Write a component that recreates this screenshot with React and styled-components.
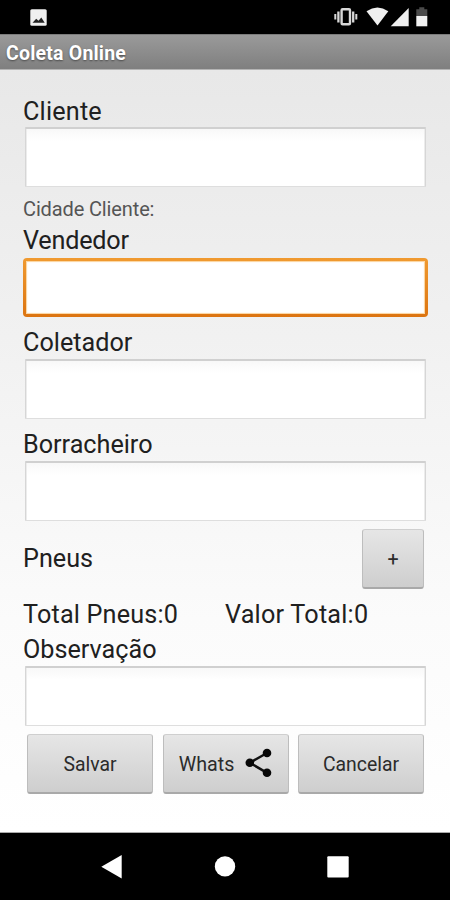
import React from "react";
import styled, { createGlobalStyle } from "styled-components";

const GlobalStyle = createGlobalStyle`
  * { box-sizing: border-box; }
  body { margin: 0; background: #000; }
`;

const Phone = styled.div`
  width: 450px;
  height: 900px;
  display: flex;
  flex-direction: column;
  overflow: hidden;
  background: #000;
  font-family: Roboto, "Liberation Sans", sans-serif;
`;

const StatusBar = styled.header`
  height: 34px;
  display: flex;
  justify-content: space-between;
  flex: none;
`;

const TitleBar = styled.h1`
  height: 36px;
  flex: none;
  margin: 0;
  padding-left: 6px;
  background: linear-gradient(#9a9a9a, #7f7f7f);
  border-top: 1px solid #7b7b7b;
  border-bottom: 1px solid #b4b4b4;
  color: #fff;
  font-size: 19.5px;
  font-weight: 700;
  line-height: 37px;
  letter-spacing: 0.2px;
  text-shadow: 0 1px 2px rgba(0, 0, 0, 0.45);
`;

const Form = styled.main`
  height: 763px;
  flex: none;
  padding: 26px 24px 0 23px;
  display: flex;
  flex-direction: column;
  background: linear-gradient(#e8e8e8, #f1f1f1 35%, #fbfbfb 72%, #fff);
  border-bottom: 1px solid #aaa;
`;

const Label = styled.label`
  display: block;
  flex: none;
  height: ${(p) => p.$height || 32}px;
  margin-top: ${(p) => p.$top || 0}px;
  color: #202020;
  font-size: 25.2px;
  line-height: 31px;
  letter-spacing: ${(p) => p.$spacing || 0}px;
  white-space: nowrap;
`;

const CityLabel = styled.div`
  height: 31px;
  flex: none;
  margin-top: 7px;
  color: #555;
  font-size: 20px;
  line-height: 31px;
  letter-spacing: -0.13px;
`;

const Field = styled.input`
  display: block;
  flex: none;
  width: 401px;
  height: 60px;
  margin: 0 0 0 2px;
  padding: 0 12px;
  border: 1px solid #d6d6d6;
  border-top: 2px solid #d0d0d0;
  border-bottom-color: #dedede;
  border-radius: 1px;
  outline: none;
  background: linear-gradient(#f8f8f8, #fff 12px);
  box-shadow: inset 1px 0 #ececec, inset -1px 0 #ececec;
  font: 24px Roboto, sans-serif;
`;

const ActiveField = styled(Field)`
  width: 405px;
  height: 59px;
  margin: 0 0 1px;
  border: 3px solid transparent;
  border-radius: 4px;
  background: linear-gradient(#fff, #fff) padding-box,
    linear-gradient(#f09a30, #dc7410) border-box;
  box-shadow: inset 0 0 1px 1px #fbd39c;
`;

const TireRow = styled.div`
  height: 60px;
  flex: none;
  margin-top: 8px;
  padding-right: 2px;
  display: flex;
  justify-content: space-between;
`;

const Totals = styled.div`
  height: 31px;
  flex: none;
  margin-top: 10px;
  display: grid;
  grid-template-columns: 202px 1fr;
`;

const Actions = styled.div`
  height: 60px;
  flex: none;
  margin: 8px 2px 0 4px;
  display: flex;
  justify-content: space-between;
`;

const Button = styled.button`
  width: ${(p) => p.$width || 126}px;
  height: 60px;
  flex: none;
  display: flex;
  align-items: center;
  justify-content: center;
  gap: 11px;
  padding: 2px 0 0;
  border: 1px solid #bdbdbd;
  border-top-color: #cfcfcf;
  border-bottom: 2px solid #a9a9a9;
  border-radius: 3px;
  background: linear-gradient(#e6e6e6, #cecece);
  color: #2b2b2b;
  font-family: Roboto, sans-serif;
  font-size: ${(p) => p.$size || 19.7}px;

  svg {
    margin-top: -3px;
  }
`;

const NavBar = styled.nav`
  flex: 1;
  display: flex;
`;

const ImageIcon = () => (
  <svg width="60" height="34" viewBox="0 0 60 34">
    <rect x="30.3" y="9.3" width="16.4" height="16.5" rx="1.5" fill="#efefef" />
    <path d="M32.5 22.8l3.7-4 2.3 2 2.8-3.4 3.4 5.4z" fill="#222" />
  </svg>
);

const SystemIcons = () => (
  <svg width="120" height="34" viewBox="330 0 120 34">
    <g fill="none" stroke="#d8d8d8">
      <rect x="341.6" y="9.2" width="8.4" height="15" rx="1" strokeWidth="2.4" />
      <path d="M338.4 11.4v11M353.2 11.4v11" strokeWidth="2.3" />
      <path d="M335.3 14v5.6M356.3 14v5.6" strokeWidth="2" />
    </g>
    <path d="M366.5 11.2Q377.5 4 388.3 11.2L377.5 25.6z" fill="#f0f0f0" />
    <path d="M408.7 8v18.3h-18z" fill="#efefef" />
    <path d="M416.3 16V9.3h3V7.2h5v2.1h3V16z" fill="#4b4b4b" />
    <path d="M416.3 16h11v10.3h-11z" fill="#f2f2f2" />
  </svg>
);

const ShareIcon = () => (
  <svg width="27" height="30" viewBox="0 0 27 30">
    <path d="M22 5L4.8 14.8 22 24.8" fill="none" stroke="#111" strokeWidth="2.5" />
    <g fill="#080808">
      <circle cx="22" cy="5" r="4.3" />
      <circle cx="4.8" cy="14.8" r="4.3" />
      <circle cx="22" cy="24.8" r="4.3" />
    </g>
  </svg>
);

const NavIcons = () => (
  <svg width="450" height="67" viewBox="0 833 450 67" fill="#fff">
    <path d="M101.3 866.7L121.7 855v23.5z" />
    <circle cx="225" cy="866.4" r="10.2" />
    <rect x="327.3" y="856.2" width="21.4" height="21.4" rx="1" />
  </svg>
);

export default function App() {
  return (
    <Phone>
      <GlobalStyle />
      <StatusBar>
        <ImageIcon />
        <SystemIcons />
      </StatusBar>
      <TitleBar>Coleta Online</TitleBar>
      <Form>
        <Label htmlFor="cliente" $height={31} $spacing={0.2}>Cliente</Label>
        <Field id="cliente" />
        <CityLabel>Cidade Cliente:</CityLabel>
        <Label htmlFor="vendedor" $height={33} $spacing={-0.2}>Vendedor</Label>
        <ActiveField id="vendedor" />
        <Label htmlFor="coletador" $top={9}>Coletador</Label>
        <Field id="coletador" />
        <Label htmlFor="borracheiro" $top={10}>Borracheiro</Label>
        <Field id="borracheiro" />
        <TireRow>
          <Label as="span" $top={14}>Pneus</Label>
          <Button type="button" $width={62}>+</Button>
        </TireRow>
        <Totals>
          <Label as="span" $spacing={0.17}>Total Pneus:0</Label>
          <Label as="span" $spacing={0.22}>Valor Total:0</Label>
        </Totals>
        <Label htmlFor="observacao" $top={4}>Observação</Label>
        <Field id="observacao" />
        <Actions>
          <Button type="button" $size={19.4}>Salvar</Button>
          <Button type="button">
            Whats
            <ShareIcon />
          </Button>
          <Button type="button" $size={19.4}>Cancelar</Button>
        </Actions>
      </Form>
      <NavBar>
        <NavIcons />
      </NavBar>
    </Phone>
  );
}
